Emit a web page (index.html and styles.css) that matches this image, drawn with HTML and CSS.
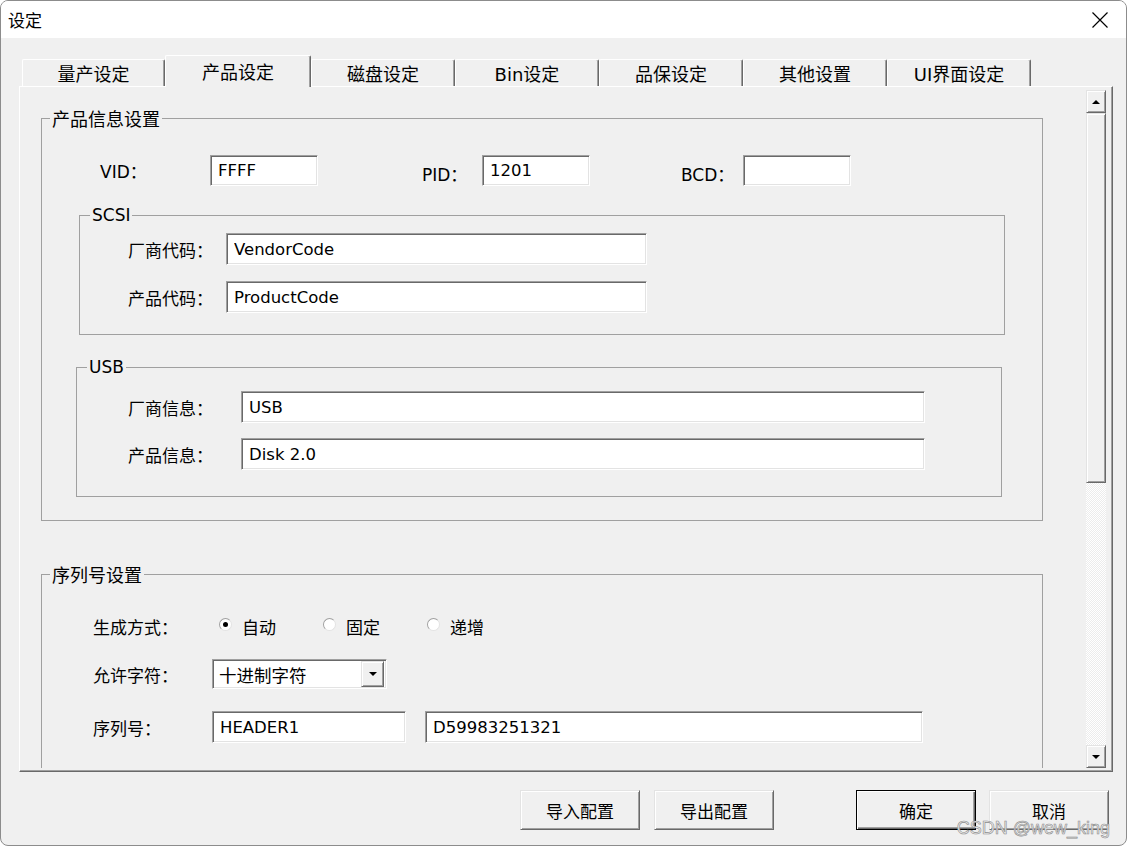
FILE: index.html
```html
<!DOCTYPE html>
<html lang="zh-CN">

<head>
  <meta charset="UTF-8">
  <title>设定</title>
  <link rel="stylesheet" href="styles.css">
</head>

<body>
  <div class="window">
    <!-- 标题栏 -->
    <div class="title-bar">
      <span class="title">设定</span>
      <svg class="close-icon" width="16" height="16" viewBox="0 0 16 16">
        <path d="M0.5 0.5 L15.5 15.5 M15.5 0.5 L0.5 15.5" stroke="#000" stroke-width="1.2" fill="none" />
      </svg>
    </div>

    <!-- 选项卡 -->
    <div class="tabs">
      <div class="tab first">量产设定</div>
      <div class="tab active">产品设定</div>
      <div class="tab">磁盘设定</div>
      <div class="tab">Bin设定</div>
      <div class="tab">品保设定</div>
      <div class="tab">其他设置</div>
      <div class="tab">UI界面设定</div>
    </div>

    <div class="tab-panel">
      <div class="scroll-view">
        <!-- 产品信息设置 -->
        <fieldset class="group info-group">
          <legend>产品信息设置</legend>
          <div class="id-row">
            <span class="vid-label">VID：</span>
            <input class="edit id-input" type="text" value="FFFF">
            <span class="pid-label">PID：</span>
            <input class="edit id-input" type="text" value="1201">
            <span class="bcd-label">BCD：</span>
            <input class="edit id-input" type="text" value="">
          </div>

          <fieldset class="group sub-group scsi-group">
            <legend>SCSI</legend>
            <div class="field-row">
              <span class="field-label">厂商代码：</span>
              <input class="edit field-input" type="text" value="VendorCode">
            </div>
            <div class="field-row">
              <span class="field-label">产品代码：</span>
              <input class="edit field-input" type="text" value="ProductCode">
            </div>
          </fieldset>

          <fieldset class="group sub-group usb-group">
            <legend>USB</legend>
            <div class="field-row">
              <span class="field-label">厂商信息：</span>
              <input class="edit field-input" type="text" value="USB">
            </div>
            <div class="field-row">
              <span class="field-label">产品信息：</span>
              <input class="edit field-input" type="text" value="Disk 2.0">
            </div>
          </fieldset>
        </fieldset>

        <!-- 序列号设置 -->
        <fieldset class="group serial-group">
          <legend>序列号设置</legend>
          <div class="serial-row mode-row">
            <span class="serial-label">生成方式：</span>
            <div class="radio-option first"><span class="radio checked"></span>自动</div>
            <div class="radio-option"><span class="radio"></span>固定</div>
            <div class="radio-option"><span class="radio"></span>递增</div>
          </div>
          <div class="serial-row char-row">
            <span class="serial-label">允许字符：</span>
            <div class="combo">
              <span class="combo-text">十进制字符</span>
              <span class="combo-btn"><span class="arrow-down"></span></span>
            </div>
          </div>
          <div class="serial-row sn-row">
            <span class="serial-label">序列号：</span>
            <input class="edit sn-head" type="text" value="HEADER1">
            <input class="edit sn-body" type="text" value="D59983251321">
          </div>
        </fieldset>
      </div>

      <!-- 滚动条 -->
      <div class="scrollbar">
        <div class="sb-btn"><span class="arrow-up"></span></div>
        <div class="sb-thumb"></div>
        <div class="sb-track"></div>
        <div class="sb-btn"><span class="arrow-down"></span></div>
      </div>
    </div>

    <!-- 底部按钮 -->
    <div class="button-row">
      <button class="btn">导入配置</button>
      <button class="btn btn-export">导出配置</button>
      <button class="btn btn-ok">确定</button>
      <button class="btn btn-cancel">取消</button>
    </div>

    <div class="watermark">CSDN @wew_king</div>
  </div>
</body>

</html>
```

FILE: styles.css
```css
/* 全局样式 */
html,
body {
  margin: 0;
  padding: 0;
  background: #fff;
}

body {
  font-family: "DejaVu Sans", "Noto Sans CJK SC", sans-serif;
  font-size: 17px;
  color: #000;
}

.window {
  position: relative;
  width: 1127px;
  height: 846px;
  box-sizing: border-box;
  border: 1px solid #8c8c8c;
  border-radius: 8px;
  background: #f0f0f0;
  overflow: hidden;
}

/* 标题栏 */
.title-bar {
  height: 37px;
  background: #fff;
  display: flex;
  align-items: center;
  justify-content: space-between;
  padding: 0 18px 0 7px;
}

.title {
  font-size: 17px;
}

/* 选项卡 */
.tabs {
  display: flex;
  align-items: flex-end;
  height: 31px;
  margin-top: 17px;
  padding-left: 21px;
}

.tab {
  width: 144px;
  height: 27px;
  box-sizing: border-box;
  border-top: 1px solid #fff;
  border-left: 1px solid #fff;
  border-right: 1px solid #696969;
  box-shadow: inset -1px 0 #a0a0a0;
  border-radius: 2px 2px 0 0;
  display: flex;
  align-items: center;
  justify-content: center;
  font-size: 18px;
  background: #f0f0f0;
}

.tab.first {
  width: 143px;
}

.tab.active {
  position: relative;
  z-index: 1;
  width: 146px;
  height: 32px;
  margin-bottom: -1px;
  padding-bottom: 2px;
}

/* 选项卡面板 */
.tab-panel {
  margin-left: 18px;
  width: 1094px;
  height: 686px;
  box-sizing: border-box;
  border-top: 1px solid #fff;
  border-left: 1px solid #fff;
  border-right: 1px solid #696969;
  border-bottom: 1px solid #696969;
  box-shadow: inset -1px -1px #a0a0a0;
  padding: 3px 6px 3px 1px;
  display: flex;
}

.scroll-view {
  flex: 1;
  overflow: hidden;
  padding-top: 16px;
}

/* 分组框 */
.group {
  margin: 0;
  padding: 0;
  border: 1px solid #a0a0a0;
  min-inline-size: 0;
  box-sizing: border-box;
}

.group legend {
  padding: 0 2px;
  margin-left: 8px;
  line-height: 20px;
  font-size: 18px;
}

.info-group > legend,
.serial-group > legend {
  padding-top: 4px;
}

.info-group {
  margin-left: 20px;
  width: 1002px;
  padding-bottom: 23px;
}

.id-row {
  display: flex;
  align-items: center;
  height: 31px;
  margin-top: 25px;
  padding-left: 58px;
}

.vid-label {
  width: 110px;
}

.pid-label {
  margin-left: 104px;
  width: 60px;
  padding-top: 6px;
}

.bcd-label {
  margin-left: 91px;
  width: 62px;
  padding-top: 6px;
}

/* 输入框 */
.edit {
  height: 32px;
  box-sizing: border-box;
  border: 1px solid;
  border-color: #a0a0a0 #fff #fff #a0a0a0;
  box-shadow: inset 1px 1px #696969, inset -1px -1px #e3e3e3;
  background: #fff;
  font: 16.5px "DejaVu Sans", "Noto Sans CJK SC", sans-serif;
  color: #000;
  padding: 0 0 0 7px;
  margin: 0;
  outline: none;
}

.id-input {
  width: 108px;
  height: 31px;
}

.sub-group {
  width: 926px;
}

.sub-group legend {
  font-size: 17px;
  margin-left: 10px;
}

.field-row {
  display: flex;
  align-items: center;
  height: 32px;
}

.scsi-group {
  margin: 19px 0 0 37px;
  padding-bottom: 21px;
}

.scsi-group .field-row {
  padding-left: 48px;
  margin-top: 16px;
}

.scsi-group .field-row:first-of-type {
  margin-top: 8px;
}

.scsi-group .field-label {
  width: 98px;
}

.scsi-group .field-input {
  width: 421px;
}

.usb-group {
  margin: 22px 0 0 34px;
  padding-bottom: 26px;
}

.usb-group .field-row {
  padding-left: 51px;
  margin-top: 15px;
}

.usb-group .field-row:first-of-type {
  margin-top: 14px;
}

.usb-group .field-label {
  width: 113px;
}

.usb-group .field-input {
  width: 684px;
}

/* 序列号设置 */
.serial-group {
  margin: 41px 0 0 20px;
  width: 1002px;
  padding-bottom: 40px;
}

.serial-row {
  display: flex;
  align-items: center;
  padding-left: 51px;
}

.serial-label {
  width: 119px;
}

.mode-row {
  height: 32px;
  margin-top: 24px;
}

.char-row {
  height: 30px;
  margin-top: 17px;
}

.sn-row {
  height: 32px;
  margin-top: 22px;
}

.radio-option {
  display: flex;
  align-items: center;
  width: 104px;
}

.radio-option.first {
  margin-left: 7px;
}

.radio {
  position: relative;
  width: 13px;
  height: 13px;
  box-sizing: border-box;
  border-radius: 50%;
  border: 1px solid;
  border-color: #a0a0a0 #e3e3e3 #e3e3e3 #a0a0a0;
  background: #fff;
  margin: -3px 10px 0 0;
}

.radio.checked::after {
  content: "";
  position: absolute;
  left: 3px;
  top: 3px;
  width: 5px;
  height: 5px;
  border-radius: 50%;
  background: #000;
}

.combo {
  display: flex;
  align-items: center;
  width: 175px;
  height: 30px;
  box-sizing: border-box;
  border: 1px solid;
  border-color: #a0a0a0 #fff #fff #a0a0a0;
  box-shadow: inset 1px 1px #696969, inset -1px -1px #e3e3e3;
  background: #fff;
  padding: 1px 2px 1px 1px;
}

.combo-text {
  flex: 1;
  padding-left: 5px;
  font-size: 17.5px;
}

.combo-btn,
.sb-btn,
.sb-thumb {
  box-sizing: border-box;
  border: 1px solid;
  border-color: #e3e3e3 #696969 #696969 #e3e3e3;
  box-shadow: inset 1px 1px #fff, inset -1px -1px #a0a0a0;
  background: #f0f0f0;
}

.combo-btn {
  width: 23px;
  height: 26px;
  display: flex;
  align-items: center;
  justify-content: center;
}

.arrow-down {
  width: 0;
  height: 0;
  border-left: 4px solid transparent;
  border-right: 4px solid transparent;
  border-top: 4px solid #000;
}

.arrow-up {
  width: 0;
  height: 0;
  border-left: 4px solid transparent;
  border-right: 4px solid transparent;
  border-bottom: 4px solid #000;
}

.sn-head {
  width: 194px;
}

.sn-body {
  width: 498px;
  margin-left: 19px;
}

/* 滚动条 */
.scrollbar {
  width: 20px;
  display: flex;
  flex-direction: column;
}

.sb-btn {
  height: 23px;
  display: flex;
  align-items: center;
  justify-content: center;
}

.sb-thumb {
  height: 370px;
}

.sb-track {
  flex: 1;
  background: repeating-conic-gradient(#fff 0 25%, #ececec 0 50%) 0 0 / 2px 2px;
}

/* 底部按钮 */
.button-row {
  display: flex;
  justify-content: flex-end;
  margin-top: 18px;
  padding-right: 17px;
}

.btn {
  width: 120px;
  height: 40px;
  box-sizing: border-box;
  border: 1px solid;
  border-color: #e3e3e3 #696969 #696969 #e3e3e3;
  box-shadow: inset 1px 1px #fff, inset -1px -1px #a0a0a0;
  background: #f0f0f0;
  font: inherit;
  font-size: 17px;
  color: #000;
  padding: 0;
  margin: 0;
}

.btn-export {
  margin-left: 14px;
}

.btn-ok {
  margin-left: 82px;
  border-color: #000;
  box-shadow: inset 1px 1px #fff, inset -1px -1px #696969, inset -2px -2px #a0a0a0;
}

.btn-cancel {
  margin-left: 13px;
}

/* 水印 */
.watermark {
  position: absolute;
  right: 16px;
  bottom: 6px;
  font-family: "Liberation Sans", Arial, sans-serif;
  font-size: 18px;
  color: #ededed;
  -webkit-text-stroke: 0.6px #8c8c8c;
}
```
